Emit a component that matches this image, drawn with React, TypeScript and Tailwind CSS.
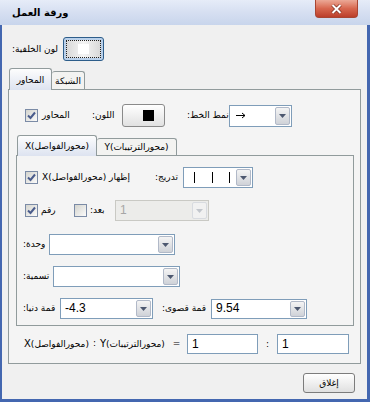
import React from "react";

const sans = "font-['Tahoma','DejaVu_Sans',sans-serif]";

function Check({ checked = false }: { checked?: boolean }) {
  return (
    <span className="flex h-[13px] w-[13px] shrink-0 items-center justify-center border border-[#7b8ba6] bg-gradient-to-br from-[#d4d4ce] to-[#fbfbfb]">
      {checked && (
        <svg width="9" height="9" viewBox="0 0 9 9">
          <path d="M1 4.5 L3.5 7 L8 1.5" fill="none" stroke="#4a5c8c" strokeWidth="2" />
        </svg>
      )}
    </span>
  );
}

function Arrow({ disabled = false }: { disabled?: boolean }) {
  return (
    <span
      className={
        disabled
          ? "m-px flex w-[15px] items-center justify-center rounded-[2px] border border-[#d8dbe0] bg-[#f1f1f1]"
          : "m-px flex w-[15px] items-center justify-center rounded-[2px] border border-[#b1b9c8] bg-gradient-to-b from-[#f4f4f4] to-[#cfd2d8]"
      }
    >
      <svg width="7" height="4" viewBox="0 0 7 4">
        <path d="M0 0 H7 L3.5 4 Z" fill={disabled ? "#c2c6cc" : "#4d5870"} />
      </svg>
    </span>
  );
}

function Combo({
  className,
  disabled = false,
  children,
}: {
  className: string;
  disabled?: boolean;
  children?: React.ReactNode;
}) {
  return (
    <div
      className={
        (disabled
          ? "border-[#c9c9c4] bg-[#ececea] text-[#a6a6a6] "
          : "border-[#7f9db9] bg-white text-black ") +
        "flex shrink-0 border " +
        className
      }
    >
      <div className="flex flex-1 items-center overflow-hidden pl-[4px] font-['Liberation_Sans',sans-serif] text-[12px]">
        {children}
      </div>
      <Arrow disabled={disabled} />
    </div>
  );
}

function Label({ className, children }: { className: string; children: React.ReactNode }) {
  return (
    <span className={"flex shrink-0 whitespace-nowrap " + className}>
      <span dir="rtl">{children}</span>
    </span>
  );
}

function Axis({ letter, name }: { letter: string; name: string }) {
  return (
    <span dir="ltr" className="whitespace-nowrap">
      <span className="text-[10px]">{letter}</span>(<bdi>{name}</bdi>)
    </span>
  );
}

export default function App() {
  return (
    <div className={"flex h-[402px] w-[370px] flex-col bg-[#f0f0f0] text-[9px] leading-[13px] text-black " + sans}>
      {/* Title bar */}
      <div className="flex h-[25px] shrink-0 items-start bg-gradient-to-b from-[#e6ecf8] via-[#d6dff1] to-[#c8d5ec]">
        <span className="ml-[12px] mt-[6px] text-[10px] font-bold">ورقة العمل</span>
        <span className="ml-auto mr-[12px] flex h-[18px] w-[43px] items-center justify-center rounded-b-[4px] border border-t-0 border-[#a84532] bg-gradient-to-b from-[#eba896] via-[#d7674f] to-[#bb3e2a]">
          <svg width="11" height="10" viewBox="0 0 11 10">
            <path d="M1.5 1 L9.5 9 M9.5 1 L1.5 9" stroke="#7a2a1c" strokeWidth="3.4" />
            <path d="M1.5 1 L9.5 9 M9.5 1 L1.5 9" stroke="#ffffff" strokeWidth="2" />
          </svg>
        </span>
      </div>

      {/* Body */}
      <div className="flex flex-1 flex-col border-b-[3px] border-l-2 border-r-[3px] border-[#4467b0]">
        {/* Background colour */}
        <div className="mt-[12px] flex items-center">
          <Label className="ml-[10px] w-[51px]">لون الخلفية:</Label>
          <span className="flex h-[24px] w-[41px] rounded-[3px] border border-[#2d5d8a] bg-[#b9d0ea] p-[2px]">
            <span className="flex flex-1 items-center justify-center border border-dotted border-[#222] bg-gradient-to-r from-[#d9d9d9] via-[#f5f5f5] to-[#d9d9d9]">
              <span className="h-[10px] w-[11px] bg-white" />
            </span>
          </span>
        </div>

        {/* Outer tabs */}
        <div className="relative z-10 ml-[7px] mt-[7px] flex items-end">
          <span className="flex h-[22px] w-[43px] justify-center rounded-t-[3px] border border-b-0 border-[#919b9c] bg-gradient-to-b from-[#fdfdfd] to-[#dde3f0] pt-[5px]">
            المحاور
          </span>
          <span className="mb-px flex h-[18px] w-[33px] justify-center rounded-t-[3px] border border-b-0 border-l-0 border-[#919b9c] bg-[#f3f3f1] pt-[3px]">
            الشبكة
          </span>
        </div>

        <div className="-mt-px ml-[6px] flex h-[275px] w-[353px] flex-col border border-[#919b9c] bg-[#f4f4f4]">
          {/* Axes row */}
          <div className="mt-[14px] flex h-[23px] items-center">
            <span className="ml-[16px]">
              <Check checked />
            </span>
            <Label className="ml-[4px] w-[50px]">المحاور</Label>
            <Label className="w-[30px]">اللون:</Label>
            <span className="flex h-[23px] w-[43px] items-center rounded-[3px] border border-[#8a8a8a] bg-gradient-to-b from-white to-[#e1e1e1]">
              <span className="ml-[20px] h-[11px] w-[11px] bg-black" />
            </span>
            <Label className="ml-[22px] w-[42px]">نمط الخط:</Label>
            <Combo className="h-[22px] w-[63px]">
              <svg width="10" height="7" viewBox="0 0 10 7" className="ml-[2px]">
                <path d="M0 3.5 H9 M6 1 L9 3.5 L6 6" fill="none" stroke="#000" strokeWidth="1" />
              </svg>
            </Combo>
          </div>

          {/* Inner tabs */}
          <div className="relative z-10 ml-[8px] mt-[8px] flex items-end">
            <span className="flex h-[21px] w-[80px] justify-center rounded-t-[3px] border border-b-0 border-[#919b9c] bg-gradient-to-b from-[#fdfdfd] to-[#dde3f0] pt-[4px]">
              <span dir="rtl">(محورالفواصل)X</span>
            </span>
            <span className="mb-px flex h-[17px] w-[80px] justify-center rounded-t-[3px] border border-b-0 border-l-0 border-[#919b9c] bg-[#f3f3f1] pt-[2px]">
              <span dir="rtl">(محورالترتيبات)Y</span>
            </span>
          </div>

          <div className="-mt-px ml-[7px] flex h-[171px] w-[338px] flex-col border border-[#919b9c] bg-[#f4f4f4]">
            <div className="mt-[11px] flex h-[21px] items-center">
              <span className="ml-[8px]">
                <Check checked />
              </span>
              <Label className="ml-[4px] w-[113px]">إظهار (محورالفواصل)X</Label>
              <Label className="w-[28px]">تدريج:</Label>
              <Combo className="h-[21px] w-[70px]">
                <span className="ml-[6px] h-[11px] w-px bg-black" />
                <span className="ml-[17px] h-[11px] w-px bg-black" />
                <span className="ml-[16px] h-[11px] w-px bg-black" />
              </Combo>
            </div>

            <div className="mt-[12px] flex h-[21px] items-center">
              <span className="ml-[8px]">
                <Check checked />
              </span>
              <Label className="ml-[3px] w-[33px]">رقم</Label>
              <Check />
              <Label className="ml-[3px] w-[25px]">بعد:</Label>
              <Combo disabled className="h-[21px] w-[94px]">
                1
              </Combo>
            </div>

            <div className="mt-[13px] flex h-[21px] items-center">
              <Label className="ml-[6px] w-[26px]">وحدة:</Label>
              <Combo className="h-[21px] w-[126px]" />
            </div>

            <div className="mt-[11px] flex h-[21px] items-center">
              <Label className="ml-[6px] w-[30px]">تسمية:</Label>
              <Combo className="h-[21px] w-[127px]" />
            </div>

            <div className="mt-[11px] flex h-[21px] items-center">
              <Label className="ml-[6px] w-[37px]">قمة دنيا:</Label>
              <Combo className="h-[21px] w-[93px]">-4.3</Combo>
              <Label className="ml-[9px] w-[49px]">قمة قصوى:</Label>
              <Combo className="h-[20px] w-[96px]">9.54</Combo>
            </div>
          </div>

          {/* Ratio */}
          <div className="mt-[8px] flex h-[20px] items-center">
            <span className="ml-[15px] flex w-[163px] shrink-0 whitespace-nowrap">
              <Axis letter="X" name="محورالفواصل" />
              <span className="mx-[4px]">:</span>
              <Axis letter="Y" name="محورالترتيبات" />
              <span className="ml-[8px]">=</span>
            </span>
            <span className="flex h-[20px] w-[71px] items-center border border-[#7f9db9] bg-white pl-[4px] font-['Liberation_Sans',sans-serif] text-[12px]">
              1
            </span>
            <span className="w-[19px] text-center">:</span>
            <span className="flex h-[20px] w-[72px] items-center border border-[#7f9db9] bg-white pl-[4px] font-['Liberation_Sans',sans-serif] text-[12px]">
              1
            </span>
          </div>
        </div>

        {/* Close */}
        <div className="mt-[9px] flex">
          <span className="ml-[301px] flex h-[20px] w-[52px] items-center justify-center rounded-[3px] border border-[#7c7c7c] bg-gradient-to-b from-white to-[#e0e0e0]">
            إغلاق
          </span>
        </div>
      </div>
    </div>
  );
}
